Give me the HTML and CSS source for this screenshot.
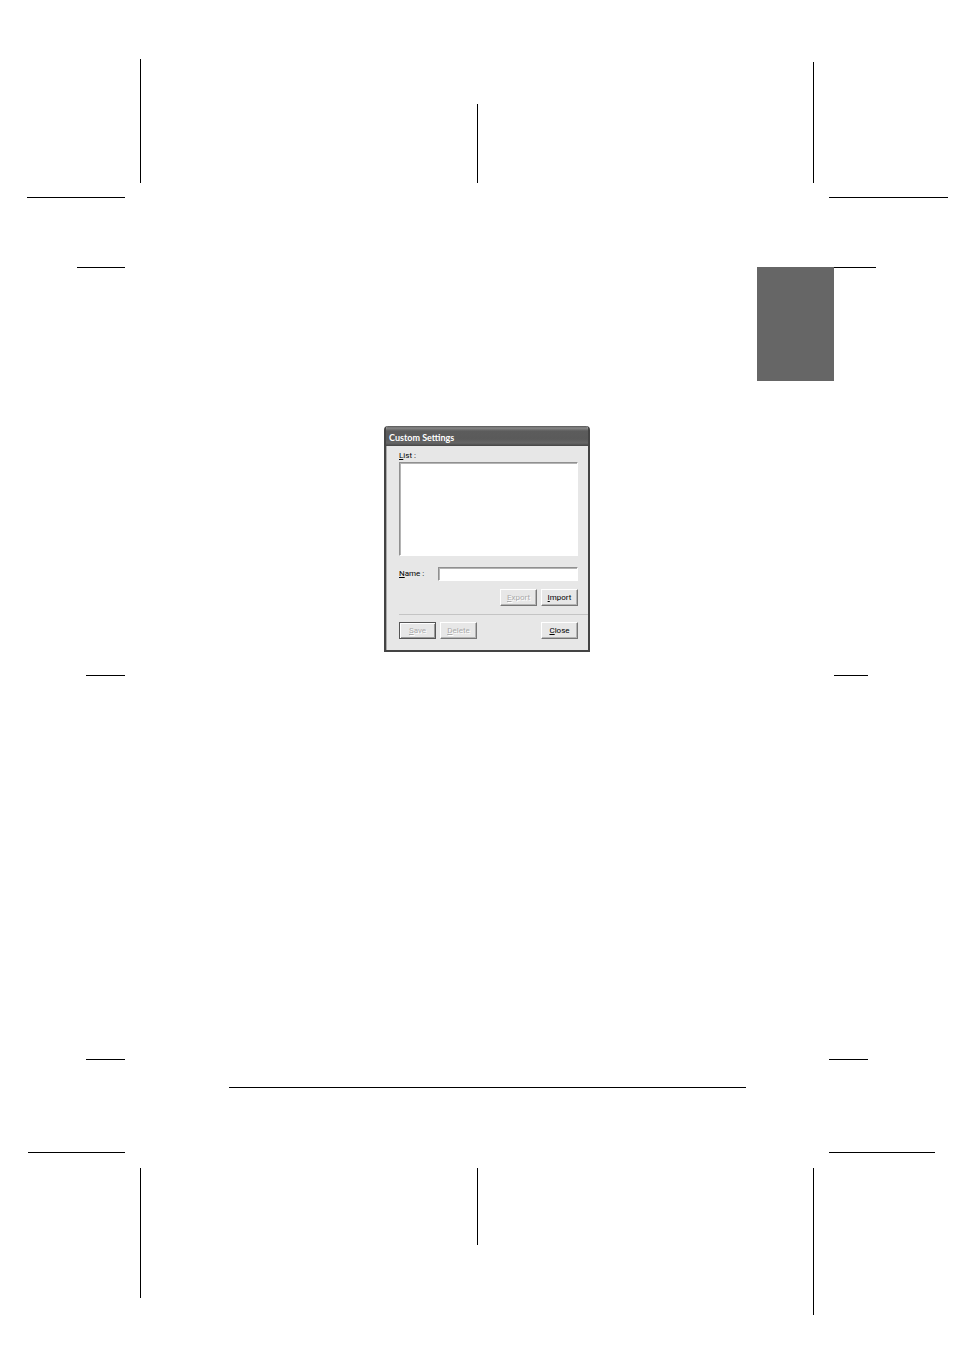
FILE: index.html
```html
<!DOCTYPE html>
<html lang="en">
<head>
<meta charset="UTF-8">
<meta name="viewport" content="width=device-width, initial-scale=1.0">
<title>Custom Settings</title>
<link rel="stylesheet" href="styles.css">
</head>
<body>

<div class="ticks ticks-top">
<span class="tick tick-left"></span>
<span class="tick tick-center"></span>
<span class="tick tick-right"></span>
</div>

<div class="band band-trim">
<span class="rule rule-trim-left"></span>
<span class="rule rule-trim-right"></span>
</div>

<div class="band band-main">
<span class="rule rule-margin-left"></span>
<main class="content">
<form class="dialog">
<h1 class="titlebar">Custom Settings</h1>
<div class="panel settings">
<label class="list-label" for="list"><u>L</u>ist :</label>
<select class="field list" id="list" size="6"></select>
<div class="name-row">
<label for="name"><u>N</u>ame :</label>
<input class="field name" id="name" type="text">
</div>
<div class="buttons buttons-right">
<button class="button" type="button" disabled><u>E</u>xport</button>
<button class="button" type="button"><u>I</u>mport</button>
</div>
</div>
<div class="panel buttons footer">
<button class="button button-default" type="button" disabled><u>S</u>ave</button>
<button class="button" type="button" disabled><u>D</u>elete</button>
<button class="button button-close" type="button"><u>C</u>lose</button>
</div>
</form>
</main>
<div class="tab"></div>
<span class="rule rule-margin-right"></span>
</div>

<div class="band band-lower">
<span class="rule rule-short"></span>
<span class="rule rule-short-right"></span>
</div>

<div class="band band-foot">
<span class="rule rule-short"></span>
<hr class="foot-line">
<span class="rule rule-short"></span>
</div>

<div class="band band-bottom">
<span class="rule rule-bottom-left"></span>
<span class="rule rule-bottom-right"></span>
</div>

<div class="ticks ticks-bottom">
<span class="tick tick-left"></span>
<span class="tick tick-center"></span>
<span class="tick tick-right"></span>
</div>

</body>
</html>
```
FILE: styles.css
```css
* {
  box-sizing: border-box;
}
body {
  margin: 0;
  background: #fff;
  color: #000;
  font-family: Roboto, "Liberation Sans", Arial, sans-serif;
  font-size: 8px;
  line-height: 10px;
}

/* vertical crop marks */
.ticks {
  display: flex;
  justify-content: space-between;
  padding: 0 140px;
}
.ticks-top {
  align-items: flex-end;
  padding-top: 59px;
  padding-bottom: 14px;
}
.ticks-bottom {
  align-items: flex-start;
  padding-bottom: 35px;
}
.tick {
  width: 1px;
  background: #000;
}
.ticks-top .tick-left { height: 124px; }
.ticks-top .tick-center { height: 79px; }
.ticks-top .tick-right { height: 121px; }
.ticks-bottom .tick-left { height: 130px; }
.ticks-bottom .tick-center { height: 77px; }
.ticks-bottom .tick-right { height: 147px; }

/* horizontal marks, each band starts at its own rule */
.band {
  display: flex;
  justify-content: space-between;
  align-items: flex-start;
}
.rule {
  flex: none;
  height: 1px;
  background: #000;
}
.band-trim {
  min-height: 70px;
  padding: 0 6px 0 27px;
}
.rule-trim-left { width: 98px; }
.rule-trim-right { width: 119px; }
.band-main {
  min-height: 408px;
  padding: 0 78px 0 77px;
}
.rule-margin-left { width: 48px; }
.rule-margin-right { width: 42px; }
.band-lower {
  min-height: 384px;
  padding: 0 86px;
}
.rule-short { width: 39px; }
.rule-short-right { width: 34px; }
.band-foot {
  min-height: 93px;
  padding: 0 86px;
}
.foot-line {
  flex: 1;
  margin: 28px 83px 0 104px;
  border: 0;
  border-top: 1px solid #000;
}
.band-bottom {
  min-height: 16px;
  padding: 0 19px 0 28px;
}
.rule-bottom-left { width: 97px; }
.rule-bottom-right { width: 106px; }
.tab {
  width: 77px;
  height: 114px;
  background: #666;
}

.content {
  flex: 1;
  margin: 0 12px 0 104px;
  padding-top: 159px;
}

/* dialog */
.dialog {
  width: 206px;
  margin: 0 auto;
  border: 2px solid #444;
  border-top: 0;
  border-radius: 4px 4px 0 0;
  background: #e7e7e7;
  overflow: hidden;
}
.titlebar {
  margin: 0 -2px;
  height: 20px;
  padding: 2px 5px 0;
  background: linear-gradient(#555 0, #888 2px, #5c5c5c 5px, #5a5a5a 13px, #666 17px, #444 20px);
  color: #fff;
  font-family: Lato, sans-serif;
  font-size: 9px;
  font-weight: bold;
  line-height: 20px;
}
.panel {
  padding: 0 10px 0 12px;
  border-left: 1px solid #aaa;
}
.settings {
  padding-top: 5px;
  padding-bottom: 8px;
}
.list-label {
  display: block;
}
.field {
  display: block;
  margin: 0;
  padding: 0 2px;
  border: 1px solid;
  border-color: #909090 #fff #fff #909090;
  border-radius: 0;
  background: #fff;
  box-shadow: inset 1px 1px #b4b4b4;
  font: inherit;
  outline: 0;
}
.list {
  width: 100%;
  height: 94px;
  margin-top: 1px;
}
.name-row {
  display: flex;
  align-items: center;
  justify-content: space-between;
  margin-top: 11px;
}
.name {
  width: 140px;
  height: 14px;
}
.buttons {
  display: flex;
  gap: 4px;
}
.buttons-right {
  justify-content: flex-end;
  margin-top: 8px;
}
.button {
  width: 37px;
  height: 17px;
  padding: 0;
  border: 1px solid;
  border-color: #fff #777 #777 #fff;
  border-radius: 0;
  background: #e7e7e7;
  box-shadow: inset -1px -1px #b4b4b4;
  color: #000;
  font: inherit;
}
.button:disabled {
  color: #aaa;
  text-shadow: 1px 1px #fff;
}
.button-default {
  border-color: #555;
  box-shadow: inset 1px 1px #fff, inset -1px -1px #999;
}
.button-close {
  margin-left: auto;
}
.footer {
  padding-top: 8px;
  padding-bottom: 11px;
  /* groove starts level with the fields */
  background: linear-gradient(#c4c4c4, #c4c4c4) 12px 0 / 100% 1px no-repeat;
}
```
